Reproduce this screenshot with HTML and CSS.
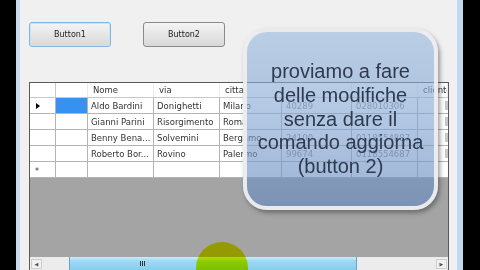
FILE: index.html
```html
<!DOCTYPE html>
<html>
<head>
<meta charset="utf-8">
<link rel="stylesheet" href="styles.css">
</head>
<body>
<div class="screen">
  <div class="edge-left"></div>
  <div class="window">
    <div class="content">
      <div class="buttons">
        <div class="btn focused">Button1</div>
        <div class="btn">Button2</div>
      </div>
      <div class="grid">
        <div class="row head">
          <div class="c rh"></div><div class="c"></div><div class="c">Nome</div><div class="c">via</div><div class="c">citta</div><div class="c"></div><div class="c"></div><div class="c">cliente</div>
        </div>
        <div class="row">
          <div class="c rh"><span class="tri"></span></div><div class="c sel"></div><div class="c">Aldo Bardini</div><div class="c">Donighetti</div><div class="c">Milano</div><div class="c num">40289</div><div class="c num">028010306</div><div class="c last"><span class="mark"></span></div>
        </div>
        <div class="row">
          <div class="c rh"></div><div class="c"></div><div class="c">Gianni Parini</div><div class="c">Risorgimento</div><div class="c">Roma</div><div class="c num"></div><div class="c num"></div><div class="c last"><span class="mark"></span></div>
        </div>
        <div class="row">
          <div class="c rh"></div><div class="c"></div><div class="c">Benny Bena...</div><div class="c">Solvemini</div><div class="c">Bergamo</div><div class="c num">24100</div><div class="c num">0118554887</div><div class="c last"><span class="mark"></span></div>
        </div>
        <div class="row">
          <div class="c rh"></div><div class="c"></div><div class="c">Roberto Bor...</div><div class="c">Rovino</div><div class="c">Palermo</div><div class="c num">99674</div><div class="c num">0118554687</div><div class="c last"><span class="mark"></span></div>
        </div>
        <div class="row">
          <div class="c rh star">*</div><div class="c"></div><div class="c"></div><div class="c"></div><div class="c"></div><div class="c"></div><div class="c"></div><div class="c last"></div>
        </div>
        <div class="empty"></div>
        <div class="hscroll">
          <div class="arrow">&#9664;</div>
          <div class="track">
            <div class="thumb"><span class="grip"></span></div>
          </div>
          <div class="arrow">&#9654;</div>
        </div>
      </div>
    </div>
  </div>
  <div class="edge-right"></div>
</div>
<div class="callout">
  <p>proviamo a fare<br>delle modifiche<br>senza dare il<br>comando aggiorna<br>(button 2)</p>
</div>
<div class="cursor"></div>
</body>
</html>
```
FILE: styles.css
```css
html, body {
  margin: 0;
  padding: 0;
  width: 480px;
  height: 270px;
  overflow: hidden;
  background: #000;
}
.screen {
  display: flex;
  height: 270px;
}
.edge-left {
  width: 16px;
  background: #000;
}
.edge-right {
  width: 17px;
  background: #000;
}
.window {
  width: 447px;
  height: 270px;
  border-left: 4px solid #c9dcef;
  border-right: 6px solid #c2d8ee;
  box-sizing: border-box;
  background: #f0f0f0;
  overflow: hidden;
}
.content {
  padding-left: 9px;
  padding-top: 22px;
}
.buttons {
  display: flex;
  gap: 32px;
}
.btn {
  width: 82px;
  height: 25px;
  box-sizing: border-box;
  border: 1px solid #8a8a8a;
  border-radius: 3px;
  background: linear-gradient(#f4f4f4, #e6e6e6 50%, #d8d8d8);
  font-family: "DejaVu Sans", sans-serif;
  font-size: 8px;
  color: #222;
  display: flex;
  align-items: center;
  justify-content: center;
}
.btn.focused {
  border-color: #7fb6e3;
  box-shadow: inset 0 0 0 1px #c8e4f8;
}
.grid {
  margin-top: 35px;
  width: 420px;
  height: 188px;
  box-sizing: border-box;
  border: 1px solid #5a5a5a;
  border-bottom: none;
  background: #a5a5a5;
  display: flex;
  flex-direction: column;
  font-family: "DejaVu Sans", sans-serif;
  font-size: 8.5px;
  color: #333;
}
.row {
  display: grid;
  grid-template-columns: 26px 32px 66px 66px 62px 70px 66px 30px;
  height: 16px;
  flex: none;
  background: #fff;
  border-bottom: 1px solid #b4b4b4;
  box-sizing: border-box;
}
.row.head {
  height: 15px;
  border-bottom: 1px solid #c8c8c8;
}
.c {
  border-right: 1px solid #b4b4b4;
  padding-left: 3px;
  white-space: nowrap;
  overflow: hidden;
  display: flex;
  align-items: center;
  position: relative;
}
.head .c {
  padding-left: 5px;
  border-right-color: #ececec;
}
.head .c.rh {
  border-right-color: #c8c8c8;
}
.c.sel {
  background: #3592f0;
}
.c.num {
  color: #888;
  padding-left: 4px;
}
.c.last {
  border-right: none;
}
.mark {
  position: absolute;
  right: 0;
  top: 3px;
  width: 3px;
  height: 9px;
  background: #c8c8c8;
}
.tri {
  width: 0;
  height: 0;
  border-top: 3px solid transparent;
  border-bottom: 3px solid transparent;
  border-left: 4px solid #000;
  margin-left: 3px;
}
.star {
  font-size: 8px;
  padding-left: 5px;
  padding-top: 4px;
}
.empty {
  height: 79px;
  flex: none;
  background: #a4a4a4;
}
.hscroll {
  height: 13px;
  flex: none;
  display: flex;
  align-items: center;
  background: #ececec;
  padding: 0 1px;
}
.arrow {
  width: 11px;
  height: 10px;
  border: 1px solid #cfcfcf;
  background: #f0f0f0;
  font-size: 5px;
  color: #555;
  display: flex;
  align-items: center;
  justify-content: center;
  box-sizing: border-box;
}
.track {
  flex: 1;
  height: 13px;
  padding-left: 27px;
  padding-right: 79px;
}
.thumb {
  height: 13px;
  background: linear-gradient(#c9ecfb, #9edaf4 30%, #86cdee);
  border-left: 1px solid #6aa4c4;
  border-right: 1px solid #6aa4c4;
  box-sizing: border-box;
  display: flex;
  justify-content: center;
  align-items: center;
}
.grip {
  width: 5px;
  height: 5px;
  background: repeating-linear-gradient(90deg, #333 0 1px, transparent 1px 2px);
  margin-left: -142px;
}
.callout {
  position: absolute;
  left: 243px;
  top: 28px;
  width: 195px;
  height: 182px;
  box-sizing: border-box;
  border: 4px solid rgba(238, 238, 238, 0.95);
  border-radius: 24px;
  background: linear-gradient(rgba(153, 185, 223, 0.62), rgba(128, 162, 207, 0.62) 55%, rgba(102, 138, 190, 0.66));
  box-shadow: 2px 3px 4px rgba(60, 60, 60, 0.5);
  display: flex;
  justify-content: center;
}
.callout p {
  margin: 0;
  padding-top: 28px;
  font-family: "Liberation Sans", Arial, sans-serif;
  font-size: 20px;
  line-height: 23.8px;
  text-align: center;
  color: #2e3a50;
}
.cursor {
  position: absolute;
  left: 196px;
  top: 242px;
  width: 52px;
  height: 28px;
  border-radius: 26px 26px 0 0;
  background: #e6ef00;
  mix-blend-mode: multiply;
}
```
